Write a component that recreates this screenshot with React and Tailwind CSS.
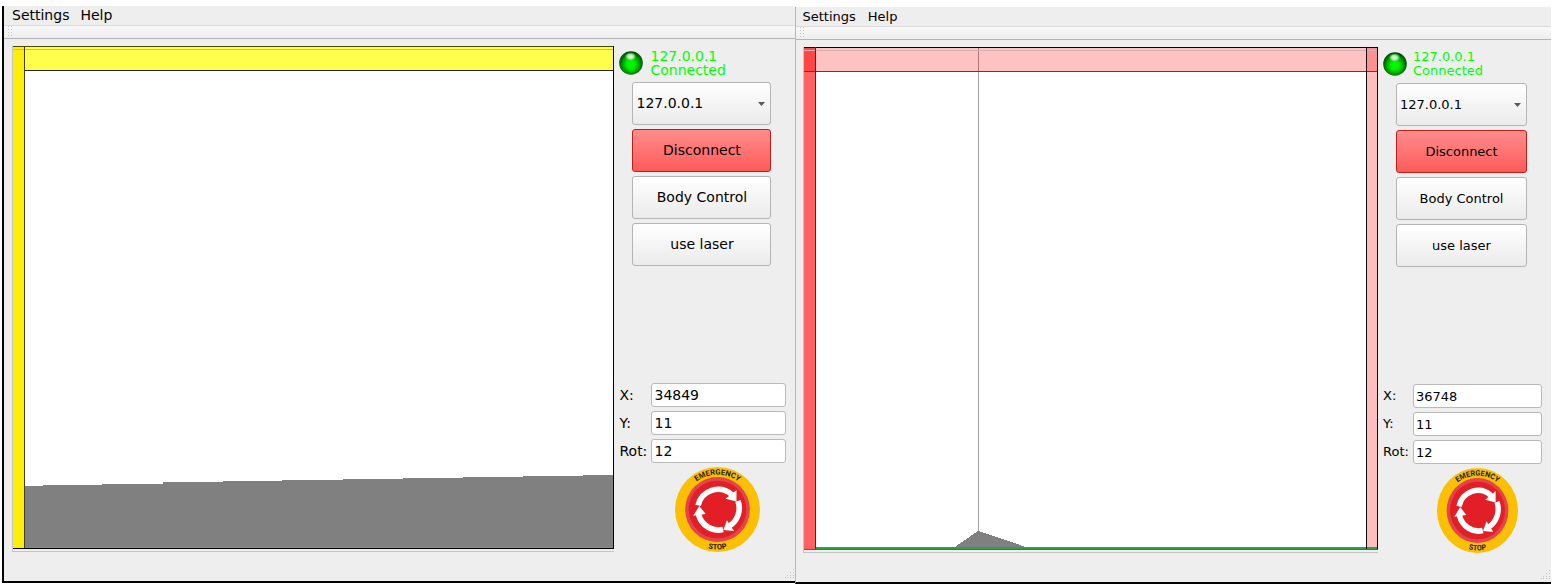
import React from "react";

const LEFT_STEPS = [
  [25, 486], [43, 485], [102, 484], [163, 482], [223, 481], [282, 480],
  [343, 479], [403, 478], [463, 477], [523, 476], [583, 475], [613, 475],
];

function stepPath() {
  let d = "M12 502";
  LEFT_STEPS.forEach(([x, y], i) => {
    const px = x - 13;
    const py = y - 46;
    d += i === 0 ? ` V${py}` : ` H${px} V${py}`;
  });
  return d + " V502 Z";
}

function LaserPlotA() {
  return (
    <svg viewBox="0 0 601 503" preserveAspectRatio="none" className="block h-full w-full" shapeRendering="crispEdges" role="img" aria-label="Range scan">
      <rect width="601" height="503" fill="#fff" />
      <path d={stepPath()} fill="#808080" />
      <rect x="12" y="501" width="588" height="1" fill="#6f9e5f" />
      <rect width="601" height="25" fill="#ffff4b" />
      <rect width="12" height="503" fill="#ffee0a" />
      <rect width="601" height="1" fill="#4a4a10" />
      <rect y="3" width="601" height="1" fill="#c4c448" />
      <rect x="12" y="24" width="589" height="1" fill="#222208" />
      <rect x="11" width="1" height="503" fill="#3c3808" />
      <rect x="600" width="1" height="503" fill="#000" />
      <rect y="502" width="601" height="1" fill="#000" />
    </svg>
  );
}

function LaserPlotB() {
  return (
    <svg viewBox="0 0 574 503" preserveAspectRatio="none" className="block h-full w-full" shapeRendering="crispEdges" role="img" aria-label="Range scan">
      <rect width="574" height="503" fill="#fff" />
      <rect x="174" width="1" height="485" fill="#a0a0a0" />
      <path d="M151 500 L174 484 L178 485 L222 500 Z" fill="#808080" />
      <rect width="574" height="24" fill="#ffc2c2" />
      <rect x="563" width="11" height="503" fill="#ffbdbd" />
      <rect x="563" width="11" height="24" fill="#ff9090" />
      <rect width="12" height="503" fill="#ff6262" />
      <rect width="12" height="24" fill="#ff4646" />
      <rect x="174" width="1" height="25" fill="#b07878" />
      <rect x="12" y="500" width="562" height="2" fill="#2fa04a" />
      <rect width="574" height="1" fill="#000" />
      <rect y="3" width="574" height="1" fill="#d8b0b4" />
      <rect y="24" width="574" height="1" fill="#5c3c3c" />
      <rect x="11" width="1" height="503" fill="#701c1c" />
      <rect x="562" width="1" height="503" fill="#111" />
      <rect x="573" width="1" height="503" fill="#000" />
      <rect y="502" width="574" height="1" fill="#4b6c50" />
    </svg>
  );
}

function StatusLed({ id }) {
  return (
    <svg viewBox="0 0 24 24" className="size-6 shrink-0" role="img" aria-label="Online">
      <defs>
        <radialGradient id={id} cx="50%" cy="56%" r="52%">
          <stop offset="0" stopColor="#00ff00" />
          <stop offset="0.35" stopColor="#00f000" />
          <stop offset="0.72" stopColor="#009800" />
          <stop offset="1" stopColor="#004c00" />
        </radialGradient>
        <radialGradient id={id + "-shine"} cx="50%" cy="45%" r="50%">
          <stop offset="0" stopColor="#f4fff4" />
          <stop offset="0.5" stopColor="#c4f8c4" stopOpacity="0.85" />
          <stop offset="1" stopColor="#60e060" stopOpacity="0" />
        </radialGradient>
      </defs>
      <circle cx="12" cy="12" r="11.8" fill={`url(#${id})`} />
      <ellipse cx="11.5" cy="6" rx="6" ry="4.5" fill={`url(#${id}-shine)`} />
    </svg>
  );
}

function EmergencyStop({ id, className }) {
  return (
    <button type="button" aria-label="Emergency stop" className={className}>
      <svg viewBox="0 0 84 84" preserveAspectRatio="none" className="block h-full w-full">
        <defs>
          <path id={id + "-top"} d="M7.5 42 A34.5 34.5 0 0 1 76.5 42" />
          <path id={id + "-bottom"} d="M2.5 42 A39.5 39.5 0 0 0 81.5 42" />
        </defs>
        <circle cx="42" cy="42" r="42" fill="#fbbf04" />
        <circle cx="42" cy="42" r="32" fill="#e5454a" />
        <circle cx="42" cy="42" r="28.5" fill="#e21f27" />
        <g transform="translate(42 42)">
          <g fill="none" stroke="#fff" strokeWidth="5.6">
            <path d="M-19.2 -4 A20.3 20.3 0 0 1 14 -14.8" />
            <path d="M20.2 -8.5 A20.8 20.8 0 0 1 11.5 16.4" />
            <path d="M5.5 19.8 A20.3 20.3 0 0 1 -18.7 5" />
          </g>
          <g fill="#fff">
            <path d="M18.8 -19.2 L18.8 -7.8 L8 -10.6 Z" />
            <path d="M5.8 20.2 L9.3 10.6 L16.4 21.2 Z" />
            <path d="M-18 -3.4 L-24 6.2 L-11.6 4.4 Z" />
          </g>
        </g>
        <text fontFamily="Roboto, Liberation Sans, sans-serif" fontWeight="700" fontSize="7.6" fill="#2b2108" textAnchor="middle">
          <textPath href={`#${id}-top`} startOffset="50%">EMERGENCY</textPath>
        </text>
        <text fontFamily="Roboto, Liberation Sans, sans-serif" fontWeight="700" fontSize="7.4" fill="#2b2108" textAnchor="middle">
          <textPath href={`#${id}-bottom`} startOffset="50%">STOP</textPath>
        </text>
      </svg>
    </button>
  );
}

function Dots({ corner }) {
  const points = corner
    ? [[8, 0], [5, 3], [8, 3], [2, 6], [5, 6], [8, 6], [0, 8], [2, 8], [5, 8], [8, 8]]
    : [[0, 0], [3, 0], [0, 3], [3, 3], [0, 6], [3, 6], [0, 9], [3, 9]];
  return (
    <svg viewBox="0 0 10 12" className="block h-3 w-2.5" shapeRendering="crispEdges" aria-hidden="true">
      {points.map(([x, y]) => (
        <rect key={`${x}-${y}`} x={x} y={y} width="1" height="1" fill="#c4c4c4" />
      ))}
    </svg>
  );
}

const BUTTON = "h-[43px] w-full rounded-[3px] border border-[#b4b4b4] bg-linear-to-b from-white to-[#ebebeb]";

function RobotWindow({ id, x, plot, frame, menu, body, panel, status, labelWidth, stop }) {
  const fields = [["X:", x], ["Y:", "11"], ["Rot:", "12"]];
  return (
    <section className={`flex min-w-0 flex-col bg-[#eeeeee] ${frame}`}>
      <nav className={`flex h-5 shrink-0 items-center border-b border-[#dcdcdc] leading-4 ${menu}`}>
        <button type="button">Settings</button>
        <button type="button">Help</button>
      </nav>
      <div className="flex h-[13px] shrink-0 items-center border-b border-[#b4b4b4] bg-linear-to-b from-[#f8f8f8] to-[#eeeeee] pl-1">
        <Dots />
      </div>
      <div className={`flex min-h-0 flex-1 gap-[5px] pt-[7px] pr-[9px] ${body}`}>
        <div className="h-[506px] min-w-0 flex-1 border-b border-l border-[#c4c4c4] pb-[2px]">{plot}</div>
        <div className={`flex h-[506px] shrink-0 flex-col ${panel}`}>
          <div className={`flex items-center pt-[3px] ${status}`}>
            <StatusLed id={id + "-led"} />
            <p className="leading-[14px] text-[#00ff00]">127.0.0.1<br />Connected</p>
          </div>
          <div className="mt-[5px] flex flex-col gap-1 pr-[15px] pl-[13px]">
            <div className="relative">
              <select aria-label="Robot address" className={`${BUTTON} appearance-none px-[3px]`}>
                <option>127.0.0.1</option>
              </select>
              <svg viewBox="0 0 7 4" className="pointer-events-none absolute top-5 right-1.5 h-1 w-[7px]" aria-hidden="true">
                <path d="M0 0 H7 L3.5 4 Z" fill="#5a5a5a" />
              </svg>
            </div>
            <button type="button" className="h-[43px] w-full rounded-[3px] border border-[#c01c1c] bg-linear-to-b from-[#ff8c8c] to-[#fc5a5a]">Disconnect</button>
            <button type="button" className={BUTTON}>Body Control</button>
            <button type="button" className={BUTTON}>use laser</button>
          </div>
          <div className="mt-auto flex flex-col gap-1">
            {fields.map(([label, value]) => (
              <div key={label} className="flex items-center">
                <label htmlFor={id + label} className={labelWidth}>{label}</label>
                <input id={id + label} defaultValue={value} className="h-6 min-w-0 flex-1 rounded-[3px] border border-[#b9b9b9] bg-white px-0.5" />
              </div>
            ))}
          </div>
          <EmergencyStop id={id + "-stop"} className={stop} />
        </div>
      </div>
      <div className="flex justify-end">
        <Dots corner />
      </div>
    </section>
  );
}

export default function App() {
  return (
    <main className="flex min-h-screen w-full items-start bg-white px-[2px] font-['DejaVu_Sans',sans-serif] text-black">
      <RobotWindow
        id="a"
        x="34849"
        plot={<LaserPlotA />}
        frame="mt-[6px] h-[577px] flex-[793] border-b-2 border-l-2 border-black text-[14px]"
        menu="gap-[11px] pb-[2px] pl-2"
        body="pl-[8px]"
        panel="w-[167px]"
        status="gap-[7px]"
        labelWidth="w-8"
        stop="mt-1 ml-[56px] size-[85px] shrink-0 rounded-full"
      />
      <RobotWindow
        id="b"
        x="36748"
        plot={<LaserPlotB />}
        frame="mt-[7px] h-[577px] flex-[756] border-b-2 border-b-black border-l border-l-[#b8b8b8] text-[13px]"
        menu="gap-3 pl-[6px]"
        body="pl-[7px]"
        panel="w-[159px]"
        status="gap-[6px]"
        labelWidth="w-[30px]"
        stop="mt-1 ml-[54px] h-[85px] w-[81px] shrink-0 rounded-full"
      />
    </main>
  );
}
